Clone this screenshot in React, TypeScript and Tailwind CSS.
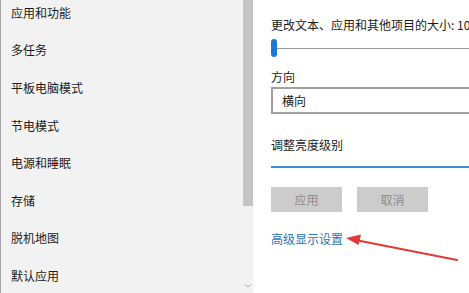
import React from 'react';

const menu = ['应用和功能', '多任务', '平板电脑模式', '节电模式', '电源和睡眠', '存储', '脱机地图', '默认应用'];

const font = { fontFamily: '"Noto Sans CJK SC", "Noto Sans", sans-serif' };

export default function App() {
  return (
    <div className="relative flex h-[293px] w-[469px] overflow-hidden bg-white text-[12px] text-[#1b1b1b]" style={font}>
      {/* sidebar */}
      <div className="flex w-[243px] shrink-0 flex-col border-l border-[#a8a8a8] bg-[#f2f2f2]">
        <div className="-mt-[6px] flex flex-col">
          {menu.map((m) => (
            <div key={m} className="flex h-[37.6px] items-center pl-[10px] leading-[16px]">
              {m}
            </div>
          ))}
        </div>
      </div>

      {/* scrollbar */}
      <div className="flex w-[10px] shrink-0 flex-col bg-[#f2f2f2]">
        <div className="h-[206px] bg-[#c4c4c4]" />
        <div className="flex flex-1 items-end justify-center pb-[5px]">
          <svg width="6" height="4" viewBox="0 0 6 4">
            <path d="M0.5 0.5 L3 3 L5.5 0.5" fill="none" stroke="#a0a0a0" strokeWidth="1" />
          </svg>
        </div>
      </div>

      {/* content */}
      <div className="flex min-w-0 flex-1 flex-col overflow-hidden bg-white pl-[18px] pt-[17px]">
        <div className="whitespace-nowrap leading-[16px]">更改文本、应用和其他项目的大小: 100%</div>

        <div className="mt-[6px] flex h-[18px] items-center">
          <div className="h-[18px] w-[6px] shrink-0 rounded-full bg-[#1f79d3]" />
          <div className="h-px flex-1 bg-[#9a9a9a]" />
        </div>

        <div className="mt-[12px] leading-[16px]">方向</div>

        <div className="mt-[2px] flex h-[27px] w-[240px] shrink-0 items-center border-2 border-[#a0a0a0] pl-[9px] leading-[16px]">
          横向
        </div>

        <div className="mt-[23px] leading-[16px]">调整亮度级别</div>
        <div className="mt-[13px] h-[2px] shrink-0 bg-[#3b8fd8]" />

        <div className="mt-[19px] flex gap-[15px]">
          <div className="flex h-[25px] w-[71px] items-center justify-center bg-[#cccccc] text-[#8c8c8c]">应用</div>
          <div className="flex h-[25px] w-[71px] items-center justify-center bg-[#cccccc] text-[#8c8c8c]">取消</div>
        </div>

        <div className="mt-[19px] leading-[16px] text-[#2d73b9]">高级显示设置</div>
      </div>

      {/* red annotation arrow */}
      <svg className="absolute left-[340px] top-[228px]" width="125" height="40" viewBox="0 0 125 40">
        <line x1="117" y1="32" x2="18" y2="12.5" stroke="#e53935" strokeWidth="2.2" strokeLinecap="round" />
        <polygon points="6,10 21,6.5 18.5,17" fill="#e53935" />
      </svg>
    </div>
  );
}
